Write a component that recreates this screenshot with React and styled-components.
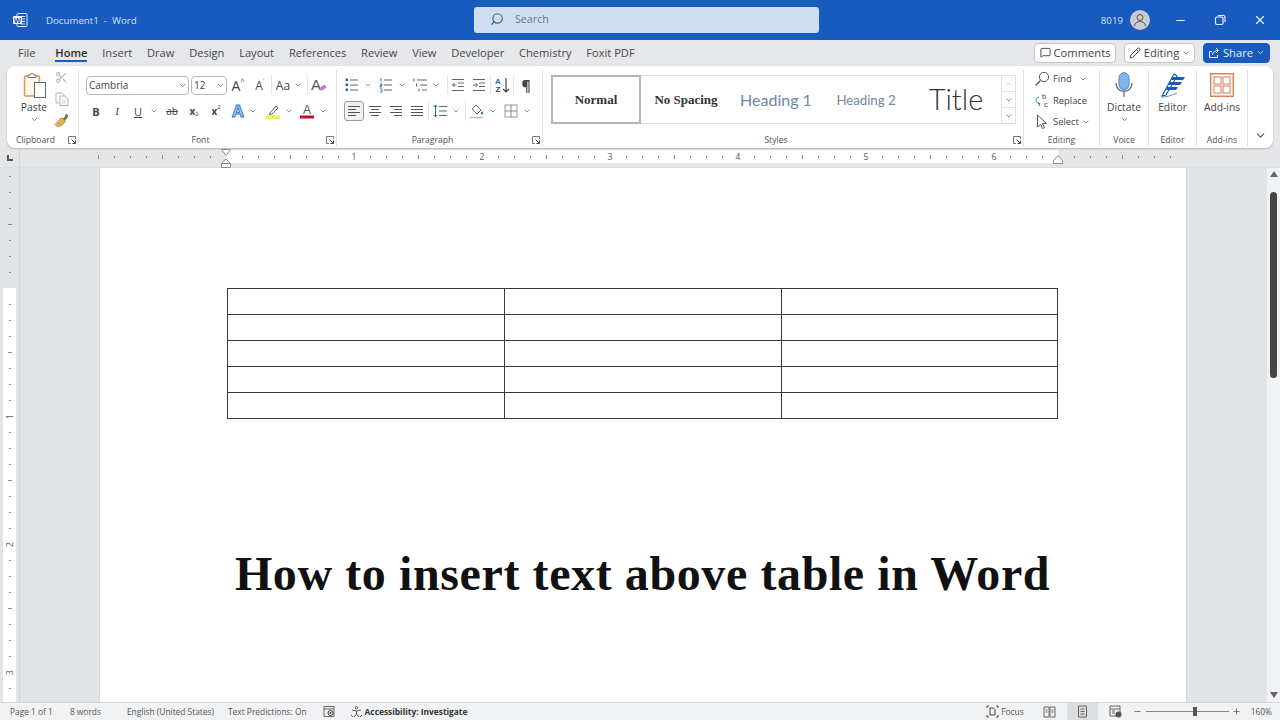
import styled, { createGlobalStyle } from 'styled-components';
import { Search, Minus, Plus, X, Scissors, ChevronDown, MessageSquare, Pencil } from 'lucide-react';

const UI = '"Open Sans", "Noto Sans", "Liberation Sans", sans-serif';
const SERIF = '"Liberation Serif", "DejaVu Serif", serif';

const Global = createGlobalStyle`
  html, body { margin: 0; padding: 0; }
  body { font-family: ${UI}; background: #e2e5e7; }
`;

const ChevWrap = styled.span`
  display: inline-flex;
  margin-top: ${(p) => p.$mt ?? 0}px;
  margin-left: ${(p) => p.$ml ?? 0}px;
  transform: ${(p) => (p.$up ? 'rotate(180deg)' : 'none')};
`;
const Chev = ({ size = 9, color = '#555', mt, ml, up }) => (
  <ChevWrap $mt={mt} $ml={ml} $up={up}><ChevronDown size={size} color={color} strokeWidth={2} /></ChevWrap>
);

const Shell = styled.div`
  width: 1280px;
  height: 720px;
  display: flex;
  flex-direction: column;
  overflow: hidden;
  background: #e2e5e7;
`;

/* title bar */
const TitleBar = styled.header`
  height: 40px;
  flex: none;
  background: #185abd;
  display: grid;
  grid-template-columns: 474px 345px 1fr;
  align-items: center;
`;
const TitleLeft = styled.div`
  display: flex;
  align-items: center;
  padding-left: 12px;
  gap: 18px;
  color: #d6e2f5;
  font-size: 9.7px;
  white-space: pre;
`;
const SearchBox = styled.div`
  height: 26px;
  box-sizing: border-box;
  background: #cfdef0;
  border-radius: 3px;
  display: flex;
  align-items: center;
  padding: 0 0 2px 16px;
  gap: 11px;
  color: #5b7a9f;
  font-size: 10.7px;
`;
const SearchGlyph = styled(Search)`
  transform: scaleX(-1);
`;
const TitleRight = styled.div`
  display: flex;
  align-items: center;
  justify-content: flex-end;
  color: #d6e2f5;
  font-size: 9.7px;
`;
const Avatar = styled.div`
  width: 20px;
  height: 20px;
  border-radius: 50%;
  background: #c9cdd3;
  margin: 0 10px 0 7px;
  display: flex;
  align-items: center;
  justify-content: center;
`;
const WinButton = styled.div`
  width: 40px;
  display: flex;
  justify-content: center;
`;

/* tabs */
const TabRow = styled.nav`
  height: 25px;
  flex: none;
  background: #e6e7ea;
  display: flex;
  align-items: center;
  justify-content: space-between;
  padding: 0 10px 0 18px;
`;
const Tabs = styled.div`
  display: flex;
  gap: 14.8px;
`;
const Tab = styled.div`
  position: relative;
  font-size: 11.1px;
  margin-right: ${(p) => p.$mr ?? 0}px;
  color: ${(p) => (p.$active ? '#2f2f2f' : '#484848')};
  font-weight: ${(p) => (p.$active ? 600 : 400)};
  &::after {
    content: '';
    display: ${(p) => (p.$active ? 'block' : 'none')};
    position: absolute;
    left: 0;
    right: 0;
    bottom: -2px;
    height: 2px;
    background: #185abd;
  }
`;
const Actions = styled.div`
  display: flex;
  gap: 8px;
`;
const ActionButton = styled.div`
  height: 20px;
  width: ${(p) => p.$w}px;
  box-sizing: border-box;
  border-radius: 4px;
  border: 1px solid ${(p) => (p.$primary ? '#185abd' : '#c6c6c6')};
  background: ${(p) => (p.$primary ? '#185abd' : '#fdfdfd')};
  color: ${(p) => (p.$primary ? '#e8f0fb' : '#444')};
  display: flex;
  align-items: center;
  justify-content: center;
  gap: 3px;
  font-size: 11.2px;
`;

/* ribbon */
const RibbonBand = styled.div`
  height: 85px;
  flex: none;
  padding: 1px 7px 2px;
  box-sizing: border-box;
  background: #e6e7ea;
`;
const Ribbon = styled.div`
  height: 82px;
  display: flex;
  background: #fff;
  border-radius: 8px;
  box-shadow: 0 1px 2px rgba(0, 0, 0, 0.22);
`;
const Group = styled.section`
  width: ${(p) => p.$w}px;
  flex: none;
  box-sizing: border-box;
  display: flex;
  flex-direction: column;
  margin: 4px 0 2px;
  border-right: 1px solid #e4e4e4;
`;
const GroupBody = styled.div`
  flex: 1;
  min-height: 0;
  box-sizing: border-box;
  display: flex;
  padding: ${(p) => p.$pt ?? 5}px 0 0 ${(p) => p.$pl ?? 0}px;
  justify-content: ${(p) => (p.$center ? 'center' : 'flex-start')};
`;
const GroupFoot = styled.div`
  height: 12px;
  flex: none;
  display: grid;
  grid-template-columns: 1fr auto 1fr;
  align-items: center;
  font-size: 8.6px;
  color: #505050;
  box-sizing: border-box;
  padding-right: ${(p) => (p.$launcher ? 14 : 0)}px;
`;
const Launcher = styled.svg`
  justify-self: end;
  margin-right: -12px;
  width: 8px;
  height: 8px;
`;
const Stack = styled.div`
  display: flex;
  flex-direction: column;
  gap: 6px;
`;
const ToolRow = styled.div`
  display: flex;
  height: 20px;
  align-items: center;
`;
const Tool = styled.div`
  width: ${(p) => p.$w}px;
  margin-left: ${(p) => p.$ml ?? 0}px;
  height: 20px;
  box-sizing: border-box;
  flex: none;
  display: flex;
  align-items: center;
  justify-content: center;
  font-size: ${(p) => p.$fs ?? 12}px;
  font-family: ${(p) => (p.$serif ? SERIF : UI)};
  font-weight: ${(p) => (p.$bold ? 700 : 400)};
  font-style: ${(p) => (p.$italic ? 'italic' : 'normal')};
  text-decoration: ${(p) => p.$deco ?? 'none'};
  color: #444;
  border-radius: 3px;
  ${(p) => p.$on && 'background: #f0f0f0; border: 1px solid #9b9b9b;'}
`;
const Tiny = styled.span`
  font-size: ${(p) => p.$fs ?? 6}px;
  font-weight: 400;
  transform: translateY(${(p) => (p.$low ? 3 : -4)}px);
`;
const Sep = styled.div`
  width: 1px;
  height: 20px;
  flex: none;
  margin-left: ${(p) => p.$ml ?? 0}px;
  background: #e4e4e4;
`;
const FieldBox = styled.div`
  width: ${(p) => p.$w}px;
  margin-left: ${(p) => p.$ml ?? 0}px;
  height: 19px;
  box-sizing: border-box;
  flex: none;
  border: 1px solid #b9b9b9;
  border-radius: 4px;
  display: flex;
  align-items: center;
  justify-content: space-between;
  padding: 0 1px 0 2px;
  font-size: 10px;
  color: #444;
`;
const BigTool = styled.div`
  width: ${(p) => p.$w ?? 40}px;
  display: flex;
  flex-direction: column;
  align-items: center;
  font-size: 10.3px;
  line-height: 14px;
  color: #444;
  padding-top: 2px;
`;
const BigIcon = styled.div`
  height: 26px;
  margin: 0 0 2px ${(p) => p.$ml ?? 0}px;
  display: flex;
  align-items: center;
`;
const SmallColumn = styled.div`
  display: flex;
  flex-direction: column;
  margin: -3px 0 0 ${(p) => p.$ml ?? 0}px;
`;
const SmallTool = styled.div`
  height: 21.5px;
  flex: none;
  display: flex;
  align-items: center;
  gap: 3px;
  font-size: 9.4px;
  color: #444;
`;
const SmallIcon = styled.div`
  width: 17px;
  display: flex;
  justify-content: center;
`;
const Gallery = styled.div`
  width: 465px;
  height: 49px;
  box-sizing: border-box;
  display: flex;
  border: 1px solid #e0e0e0;
  border-left: none;
`;
const StyleTile = styled.div`
  width: 90px;
  flex: none;
  box-sizing: border-box;
  display: flex;
  align-items: center;
  justify-content: center;
  color: ${(p) => p.$color};
  font-family: ${(p) => (p.$serif ? SERIF : '"Lato", sans-serif')};
  font-weight: ${(p) => p.$weight ?? 400};
  font-size: ${(p) => p.$fs}px;
  padding-bottom: ${(p) => p.$pb ?? 0}px;
  ${(p) => p.$on && 'margin: -1px 0; height: 49px; border: 2px solid #b4b4b4;'}
`;
const GalleryScroll = styled.div`
  margin-left: auto;
  width: 13px;
  display: flex;
  flex-direction: column;
  border-left: 1px solid #e0e0e0;
`;
const ScrollCell = styled.div`
  flex: 1;
  display: flex;
  align-items: center;
  justify-content: center;
  border-bottom: 1px solid #e0e0e0;
  &:last-child { border-bottom: none; }
`;
const Collapse = styled.div`
  flex: 1;
  display: flex;
  align-items: flex-end;
  justify-content: center;
  padding-bottom: 6px;
`;

/* rulers */
const HRuler = styled.div`
  height: 18px;
  flex: none;
  position: relative;
  display: flex;
  background: #e4e6e8;
  border-bottom: 1px solid #dcdfe1;
  box-sizing: border-box;
`;
const RulerCorner = styled.div`
  width: 20px;
  flex: none;
  box-sizing: border-box;
  border-right: 1px solid #d2d5d7;
  padding: 5px 0 0 7px;
  display: flex;
  align-items: flex-start;
`;
const RulerSpan = styled.div`
  width: ${(p) => p.$w}px;
  height: 13px;
  flex: none;
  box-sizing: border-box;
  padding-left: ${(p) => p.$pl}px;
  display: flex;
  background: ${(p) => (p.$white ? '#fff' : 'transparent')};
`;
const HCell = styled.div`
  width: 16px;
  flex: none;
  display: flex;
  align-items: center;
  justify-content: center;
  font-size: 8.5px;
  color: #555;
`;
const HTick = styled.div`
  width: 1px;
  height: ${(p) => (p.$long ? 4 : 2)}px;
  background: #8a8a8a;
`;
const IndentMarker = styled.svg`
  position: absolute;
  left: 220px;
  top: -1px;
  width: 12px;
  height: 19px;
`;
const RightMarker = styled.svg`
  position: absolute;
  left: 1052px;
  top: 3px;
  width: 12px;
  height: 12px;
`;

const Workspace = styled.main`
  flex: 1;
  min-height: 0;
  display: flex;
`;
const VRuler = styled.div`
  width: 20px;
  flex: none;
  box-sizing: border-box;
  border-right: 1px solid #d2d5d7;
  padding-left: 3px;
`;
const VSpan = styled.div`
  width: 13px;
  height: ${(p) => p.$h}px;
  box-sizing: border-box;
  padding-top: ${(p) => p.$pt}px;
  background: ${(p) => (p.$white ? '#fff' : 'transparent')};
`;
const VCell = styled.div`
  height: 16px;
  display: flex;
  align-items: center;
  justify-content: center;
  font-size: 8.5px;
  color: #555;
`;
const RotNum = styled.span`
  transform: rotate(-90deg);
`;
const VTick = styled.div`
  height: 1px;
  width: ${(p) => (p.$long ? 4 : 2)}px;
  background: #8a8a8a;
`;
const Canvas = styled.div`
  flex: 1;
  min-width: 0;
  display: flex;
  padding-left: 80px;
  overflow: hidden;
`;
const Page = styled.article`
  width: 1086px;
  flex: none;
  box-sizing: border-box;
  background: #fff;
  padding: 120px 128px 0 127px;
  box-shadow: 0 0 0 1px #d6d9db;
`;
const DocTable = styled.table`
  width: 831px;
  border-collapse: collapse;
  table-layout: fixed;
  td {
    height: 25px;
    border: 1px solid #3a3a3a;
    padding: 0;
  }
  td:first-child {
    width: 276px;
  }
`;
const DocTitle = styled.h1`
  margin: 128px 0 0;
  text-align: center;
  font-family: ${SERIF};
  font-weight: 700;
  font-size: 48px;
  line-height: 54px;
  color: #111;
  white-space: nowrap;
  letter-spacing: 0.6px;
`;
const ScrollBar = styled.div`
  width: 13px;
  flex: none;
  background: #f0f2f3;
  display: flex;
  flex-direction: column;
  align-items: center;
  padding-top: 3px;
  box-sizing: border-box;
`;
const ScrollThumb = styled.div`
  width: 7px;
  height: 186px;
  margin-top: 15px;
  border-radius: 4px;
  background: #454545;
`;
const ScrollArrow = styled.div`
  width: 0;
  height: 0;
  border-left: 4px solid transparent;
  border-right: 4px solid transparent;
  ${(p) => (p.$down ? 'border-top: 6px solid #666; margin-top: auto; margin-bottom: 4px;' : 'border-bottom: 6px solid #666;')}
`;

/* status bar */
const StatusBar = styled.footer`
  height: 18px;
  flex: none;
  box-sizing: border-box;
  background: #f1f2f3;
  border-top: 1px solid #d6d6d6;
  display: flex;
  align-items: center;
  justify-content: space-between;
  font-size: 8.4px;
  color: #555;
`;
const StatusSide = styled.div`
  display: flex;
  align-items: center;
  height: 100%;
`;
const StatusItem = styled.span`
  display: flex;
  align-items: center;
  gap: 2px;
  margin-left: ${(p) => p.$ml}px;
  margin-right: ${(p) => p.$mr ?? 0}px;
  font-weight: ${(p) => (p.$bold ? 700 : 400)};
  color: ${(p) => (p.$bold ? '#333' : '#555')};
  white-space: nowrap;
`;
const ViewButton = styled.div`
  width: 31px;
  height: 100%;
  margin-left: ${(p) => p.$ml ?? 0}px;
  display: flex;
  align-items: center;
  justify-content: center;
  background: ${(p) => (p.$on ? '#dcdddf' : 'transparent')};
`;
const ZoomOut = styled(Minus)`
  margin-left: 2px;
`;
const ZoomTrack = styled.div`
  width: 83px;
  height: 1px;
  margin: 0 3px 0 4px;
  background: #888;
  position: relative;
`;
const ZoomThumb = styled.div`
  position: absolute;
  left: 47px;
  top: -4px;
  width: 4px;
  height: 9px;
  background: #555;
`;

/* drawn icons */
const Ico = ({ w = 16, h = 16, children }) => (
  <svg width={w} height={h} viewBox={`0 0 ${w} ${h}`} fill="none">{children}</svg>
);
const WordLogo = () => (
  <Ico>
    <rect x="5" y="1.5" width="10" height="13" rx="1" fill="#185abd" stroke="#dfe9f7" />
    <path d="M9 4.5h4M9 7h4M9 9.5h4M9 12h4" stroke="#dfe9f7" />
    <rect x="1" y="4" width="9" height="8" fill="#f4f7fc" rx="1" />
    <text x="5.5" y="10.6" fontSize="7.5" fontWeight="700" fontFamily="Liberation Sans" fill="#185abd" textAnchor="middle">W</text>
  </Ico>
);
const PasteIcon = () => (
  <Ico w={24} h={26}>
    <rect x="1.5" y="4" width="15" height="20" rx="1" fill="#fdf6ec" stroke="#d99a55" strokeWidth="1.5" />
    <path d="M5 5V3h2.5a1.7 1.7 0 0 1 3.4 0H13v2.5H5z" fill="#fff" stroke="#777" />
    <rect x="11.5" y="10.5" width="11" height="15" fill="#fff" stroke="#666" />
  </Ico>
);
const CopyIcon = () => (
  <Ico w={14} h={14}>
    <path d="M1 1h6l2 2v8H1z" stroke="#b4b4b4" fill="#fff" />
    <path d="M5 4h5l3 3v6.5H5z" stroke="#b4b4b4" fill="#fff" />
    <path d="M7 9h4M7 11h4" stroke="#cdcdcd" />
  </Ico>
);
const PainterIcon = () => (
  <Ico w={15} h={15}>
    <path d="M9 6l2-2 1-3 2 1.5-1 2.5-2 2.5z" fill="#777" stroke="#555" strokeWidth="0.6" />
    <path d="M7.5 4.5l4 4L8 12 3.5 14 1 11.5l3-3z" fill="#e9b455" stroke="#a9824a" strokeWidth="0.8" />
    <path d="M4 9.5l2.5 2.5" stroke="#a9824a" strokeWidth="0.8" />
  </Ico>
);
const Launch = () => (
  <Launcher viewBox="0 0 8 8" fill="none">
    <path d="M7.5 3V.5H.5v7H3" stroke="#777" />
    <path d="M3.5 3.5l3.5 3.5M7.5 4.5v3h-3" stroke="#444" />
  </Launcher>
);
const listLines = (x) => `M${x} 3h${13 - x}M${x} 8h${13 - x}M${x} 13h${13 - x}`;
const BulletIcon = () => (
  <Ico w={14} h={16}>
    <path d={listLines(5)} stroke="#666" strokeWidth="1.2" />
    <rect x="0.5" y="1.5" width="2.6" height="2.6" fill="#2a6f9e" />
    <rect x="0.5" y="6.5" width="2.6" height="2.6" fill="#2a6f9e" />
    <rect x="0.5" y="11.5" width="2.6" height="2.6" fill="#2a6f9e" />
  </Ico>
);
const NumberIcon = () => (
  <Ico w={14} h={16}>
    <path d={listLines(5)} stroke="#666" strokeWidth="1.2" />
    <path d="M2 1v3.5M1 7h2v1.5H1V10h2M1 12h2v3H1" stroke="#2a6f9e" strokeWidth="0.9" />
  </Ico>
);
const MultiIcon = () => (
  <Ico w={14} h={16}>
    <path d="M4 3h10M7 8h7M9 13h5" stroke="#666" strokeWidth="1.2" />
    <path d="M1 1.5v3M3.5 6.5v3M6 11.5v3" stroke="#2a6f9e" />
  </Ico>
);
const IndentIcon = ({ inc }) => (
  <Ico w={14} h={14}>
    <path d="M1 1.5h12M7 5h6M7 8.5h6M1 12.5h12" stroke="#666" strokeWidth="1.1" />
    <path d={inc ? 'M1 7h4M3.5 5l2 2-2 2' : 'M1.5 7h4M3.5 5l-2 2 2 2'} stroke="#2a7f6e" />
  </Ico>
);
const SortIcon = () => (
  <Ico w={16} h={18}>
    <text x="4" y="8" fontSize="8" fontFamily="Liberation Sans" fill="#2a6f9e" textAnchor="middle" fontWeight="700">A</text>
    <text x="4" y="16" fontSize="8" fontFamily="Liberation Sans" fill="#444" textAnchor="middle" fontWeight="700">Z</text>
    <path d="M12 2v14M9 13l3 3 3-3" stroke="#444" strokeWidth="1.2" />
  </Ico>
);
const AlignIcon = ({ d }) => (
  <Ico w={14} h={12}>
    <path d={d} stroke="#555" strokeWidth="1.1" />
  </Ico>
);
const SpacingIcon = () => (
  <Ico w={14} h={14}>
    <path d="M6 2.5h8M6 7h8M6 11.5h8" stroke="#666" strokeWidth="1.1" />
    <path d="M2.5 1v12M.8 3l1.7-2 1.7 2M.8 11l1.7 2 1.7-2" stroke="#2a7f6e" />
  </Ico>
);
const ShadeIcon = () => (
  <Ico>
    <path d="M7 2l5 5-4 4-5-5z" fill="#fff" stroke="#666" />
    <path d="M13 8c1 1.5 1.5 2 1 3s-2 .5-2-.5.5-1.5 1-2.5z" fill="#2a6f9e" />
    <path d="M1 14.5h13" stroke="#bbb" strokeWidth="1.5" />
  </Ico>
);
const BorderIcon = () => (
  <Ico w={14} h={14}>
    <rect x="1" y="1" width="12" height="12" stroke="#999" />
    <path d="M7 1v12M1 7h12" stroke="#888" />
  </Ico>
);
const ClearIcon = () => (
  <Ico w={18} h={18}>
    <text x="1" y="14" fontSize="15" fontFamily="Liberation Sans" fill="#555">A</text>
    <rect x="10" y="10" width="6.5" height="3.5" rx="1" transform="rotate(-35 13 12)" fill="#c878c0" />
  </Ico>
);
const TextEffect = () => (
  <Ico w={18} h={18}>
    <text x="9" y="15" fontSize="17" fontWeight="700" fontFamily="Liberation Sans" fill="#bcdcf3" stroke="#2b79c2" strokeWidth="1" textAnchor="middle">A</text>
  </Ico>
);
const HighlightIcon = () => (
  <Ico>
    <path d="M5 10l6-7 2 2-6 6-3 .5z" fill="#fff" stroke="#666" />
    <rect x="1" y="12.5" width="14" height="3.5" fill="#f6f250" />
  </Ico>
);
const FontColorIcon = () => (
  <Ico>
    <text x="8" y="11" fontSize="12" fontFamily="Liberation Sans" fill="#555" textAnchor="middle">A</text>
    <rect x="1" y="12.5" width="14" height="3" fill="#c8102e" />
  </Ico>
);
const ReplaceIcon = () => (
  <Ico>
    <text x="8" y="7" fontSize="7.5" fontFamily="Liberation Sans" fill="#444">b</text>
    <text x="10" y="14.5" fontSize="7.5" fontFamily="Liberation Sans" fill="#444">c</text>
    <path d="M5 5C1 6 1 11 6 12M4 10.5L6 12l-1.5 2" stroke="#2a7f9e" />
  </Ico>
);
const SelectIcon = () => (
  <Ico w={14} h={16}>
    <path d="M2.5 1v12l3-2.5 2 4 2-1-2-4h4z" fill="#fff" stroke="#555" />
  </Ico>
);
const FindIcon = () => (
  <Ico>
    <circle cx="10" cy="6" r="4.6" stroke="#555" />
    <path d="M6.5 9.5L1.5 14.5" stroke="#555" strokeWidth="1.3" />
  </Ico>
);
const MicIcon = () => (
  <Ico w={18} h={26}>
    <rect x="4" y="0.7" width="10" height="17" rx="5" fill="#7cb6ea" stroke="#4a86c0" />
    <path d="M1 11c0 11 16 11 16 0M9 19v6" stroke="#6d6d6d" strokeWidth="1.3" />
  </Ico>
);
const EditorIcon = () => (
  <Ico w={26} h={26}>
    <path d="M12 5h13l-2 3H11zM10 10h12l-2 3H8zM7 15h11l-2 3H6z" fill="#185abd" />
    <path d="M2 24L14 2l3 2L6 23z" stroke="#185abd" strokeWidth="1.2" />
    <path d="M1 25c5 0 10-1 16-4" stroke="#6d90c4" />
  </Ico>
);
const AddinsIcon = () => (
  <Ico w={24} h={24}>
    <rect x="0.7" y="0.7" width="22.6" height="22.6" stroke="#d9825b" strokeWidth="1.4" fill="#fdf3ec" />
    <rect x="4" y="4" width="7" height="7" stroke="#d9825b" fill="#fff" />
    <rect x="13" y="4" width="7" height="7" stroke="#d9825b" fill="#fff" />
    <rect x="4" y="13" width="7" height="7" stroke="#d9825b" fill="#fff" />
    <rect x="13" y="13" width="7" height="7" stroke="#d9825b" fill="#fff" />
  </Ico>
);
const AvatarGlyph = () => (
  <Ico w={14} h={14}>
    <circle cx="7" cy="4.5" r="3" stroke="#555" />
    <path d="M1.5 13c.5-6 10.5-6 11 0" stroke="#555" />
  </Ico>
);
const RestoreIcon = () => (
  <Ico w={12} h={12}>
    <rect x="1.5" y="3" width="7.5" height="7.5" rx="1.5" stroke="#eaf1fb" strokeWidth="1.2" />
    <path d="M4 1.5h5a2 2 0 0 1 2 2V8" stroke="#eaf1fb" strokeWidth="1.2" />
  </Ico>
);
const ShareIcon = () => (
  <Ico w={12} h={12}>
    <path d="M4 4.5H1.5v6h8V8M4.5 8C4.500 5 7 3.5 10 3.5M8 1l2.5 2.5L8 6" stroke="#e8f0fb" />
  </Ico>
);
const CornerTab = () => (
  <Ico w={6} h={6}><path d="M1 0v5h5" stroke="#555" strokeWidth="2" /></Ico>
);
const TinyDoc = ({ kind }) => (
  <Ico w={13} h={13}>
    {kind === 'read' && <path d="M1 2h5v10H1zM7 2h5v10H7zM2.5 5h2M2.5 7h2M8.5 5h2M8.5 7h2" stroke="#666" />}
    {kind === 'print' && <path d="M2.5 1h8v11h-8zM4.5 4h4M4.5 6.5h4M4.5 9h4" stroke="#666" />}
    {kind === 'web' && (
      <>
        <path d="M1 1h10v10H1zM1 4h10M3 6h3M3 8h3" stroke="#666" />
        <circle cx="9.5" cy="9.5" r="3" fill="#555" />
      </>
    )}
    {kind === 'macro' && (
      <>
        <path d="M1 1.5h10v10H1zM1 4h10" stroke="#666" />
        <circle cx="7.5" cy="8" r="2.5" stroke="#444" />
        <circle cx="7.5" cy="8" r="1" fill="#444" />
      </>
    )}
    {kind === 'focus' && <path d="M1 3V1h2M10 1h2v2M12 10v2h-2M3 12H1v-2M4 3h3.5L9 4.5V10H4z" stroke="#444" />}
    {kind === 'access' && <path d="M6.5 1.5a1.2 1.2 0 1 1 0 2.4 1.2 1.2 0 0 1 0-2.4zM2 5l4.5 1L11 5M6.5 6v3M6.5 9L4 12M6.5 9L9 12M1 10l2 2M12 10l-2 2" stroke="#555" />}
  </Ico>
);

const TABS = ['File', 'Home', 'Insert', 'Draw', 'Design', 'Layout', 'References', 'Review', 'View', 'Developer', 'Chemistry', 'Foxit PDF'];
const range = (n) => Array.from({ length: n }, (_, i) => i);

const hCells = (start, count) => range(count).map((i) => {
  const n = start + i;
  if (n > 0 && n % 8 === 0 && n <= 48) return <HCell key={n}>{n / 8}</HCell>;
  return <HCell key={n}><HTick $long={n % 4 === 0} /></HCell>;
});

const vCells = (start, count) => range(count).map((i) => {
  const n = start + i;
  if (n > 0 && n % 8 === 0) return <VCell key={n}><RotNum>{n / 8}</RotNum></VCell>;
  return <VCell key={n}><VTick $long={n % 4 === 0} /></VCell>;
});

const Foot = ({ label, launcher }) => (
  <GroupFoot $launcher={launcher}>
    <span />
    <span>{label}</span>
    {launcher ? <Launch /> : <span />}
  </GroupFoot>
);

const App = () => (
  <Shell>
    <Global />
    <TitleBar>
      <TitleLeft><WordLogo />Document1  -  Word</TitleLeft>
      <SearchBox><SearchGlyph size={14} color="#3f5f88" />Search</SearchBox>
      <TitleRight>
        8019
        <Avatar><AvatarGlyph /></Avatar>
        <WinButton><Minus size={13} color="#eaf1fb" /></WinButton>
        <WinButton><RestoreIcon /></WinButton>
        <WinButton><X size={14} color="#eaf1fb" /></WinButton>
      </TitleRight>
    </TitleBar>

    <TabRow>
      <Tabs>{TABS.map((t) => <Tab key={t} $active={t === 'Home'} $mr={t === 'File' ? 5 : 0}>{t}</Tab>)}</Tabs>
      <Actions>
        <ActionButton $w={82}><MessageSquare size={11} />Comments</ActionButton>
        <ActionButton $w={71}><Pencil size={12} />Editing<Chev size={8} /></ActionButton>
        <ActionButton $w={67} $primary><ShareIcon />Share<Chev size={9} color="#e8f0fb" /></ActionButton>
      </Actions>
    </TabRow>

    <RibbonBand>
      <Ribbon>
        <Group $w={72}>
          <GroupBody $pt={0} $pl={10}>
            <BigTool $w={34}>
              <BigIcon $ml={2}><PasteIcon /></BigIcon>
              Paste
              <Chev mt={1} />
            </BigTool>
            <SmallColumn $ml={2}>
              <SmallTool><SmallIcon><Scissors size={13} color="#b5b5b5" /></SmallIcon></SmallTool>
              <SmallTool><SmallIcon><CopyIcon /></SmallIcon></SmallTool>
              <SmallTool><SmallIcon><PainterIcon /></SmallIcon></SmallTool>
            </SmallColumn>
          </GroupBody>
          <Foot label="Clipboard" launcher />
        </Group>

        <Group $w={258}>
          <GroupBody $pl={7}>
            <Stack>
              <ToolRow>
                <FieldBox $w={103}>Cambria<Chev size={9} /></FieldBox>
                <FieldBox $w={36} $ml={2}>12<Chev size={9} /></FieldBox>
                <Tool $w={22} $fs={14}>A<Tiny $fs={7}>^</Tiny></Tool>
                <Tool $w={22} $fs={12}>A<Tiny $fs={7}>˅</Tiny></Tool>
                <Sep />
                <Tool $w={22} $fs={12}>Aa</Tool>
                <Tool $w={8}><Chev size={8} /></Tool>
                <Sep $ml={5} />
                <Tool $w={22}><ClearIcon /></Tool>
              </ToolRow>
              <ToolRow>
                <Tool $w={20} $fs={11} $bold>B</Tool>
                <Tool $w={22} $fs={11} $italic $serif>I</Tool>
                <Tool $w={20} $fs={11} $deco="underline">U</Tool>
                <Tool $w={12}><Chev size={8} /></Tool>
                <Tool $w={24} $fs={10} $deco="line-through">ab</Tool>
                <Tool $w={20} $fs={10} $bold>x<Tiny $low>2</Tiny></Tool>
                <Tool $w={24} $fs={10} $bold>x<Tiny>2</Tiny></Tool>
                <Tool $w={20}><TextEffect /></Tool>
                <Tool $w={10}><Chev size={8} /></Tool>
                <Tool $w={20} $ml={5}><HighlightIcon /></Tool>
                <Tool $w={12}><Chev size={8} /></Tool>
                <Tool $w={24}><FontColorIcon /></Tool>
                <Tool $w={8}><Chev size={8} /></Tool>
              </ToolRow>
            </Stack>
          </GroupBody>
          <Foot label="Font" launcher />
        </Group>

        <Group $w={206}>
          <GroupBody $pl={7}>
            <Stack>
              <ToolRow>
                <Tool $w={16}><BulletIcon /></Tool>
                <Tool $w={16}><Chev size={8} /></Tool>
                <Tool $w={20}><NumberIcon /></Tool>
                <Tool $w={12}><Chev size={8} /></Tool>
                <Tool $w={24}><MultiIcon /></Tool>
                <Tool $w={8}><Chev size={8} /></Tool>
                <Sep $ml={7} />
                <Tool $w={20}><IndentIcon /></Tool>
                <Tool $w={22}><IndentIcon inc /></Tool>
                <Sep />
                <Tool $w={22}><SortIcon /></Tool>
                <Sep />
                <Tool $w={24} $fs={14} $bold>¶</Tool>
              </ToolRow>
              <ToolRow>
                <Tool $w={20} $on><AlignIcon d="M1 1.5h12M1 4.5h8M1 7.5h12M1 10.5h8" /></Tool>
                <Tool $w={22}><AlignIcon d="M1 1.5h12M3 4.5h8M1 7.5h12M3 10.5h8" /></Tool>
                <Tool $w={20}><AlignIcon d="M1 1.5h12M5 4.5h8M1 7.5h12M5 10.5h8" /></Tool>
                <Tool $w={22}><AlignIcon d="M1 1.5h12M1 4.5h12M1 7.5h12M1 10.5h12" /></Tool>
                <Sep />
                <Tool $w={22}><SpacingIcon /></Tool>
                <Tool $w={10}><Chev size={8} /></Tool>
                <Sep $ml={4} />
                <Tool $w={22}><ShadeIcon /></Tool>
                <Tool $w={10}><Chev size={8} /></Tool>
                <Tool $w={24} $ml={1}><BorderIcon /></Tool>
                <Tool $w={8}><Chev size={8} /></Tool>
              </ToolRow>
            </Stack>
          </GroupBody>
          <Foot label="Paragraph" launcher />
        </Group>

        <Group $w={481}>
          <GroupBody $pl={8}>
            <Gallery>
              <StyleTile $on $serif $fs={13} $weight={700} $color="#333">Normal</StyleTile>
              <StyleTile $serif $fs={13} $weight={700} $color="#333">No Spacing</StyleTile>
              <StyleTile $fs={16} $color="#6d88a4">Heading 1</StyleTile>
              <StyleTile $fs={13.2} $color="#6d88a4">Heading 2</StyleTile>
              <StyleTile $fs={29} $weight={300} $color="#333" $pb={3}>Title</StyleTile>
              <GalleryScroll>
                <ScrollCell><Chev size={8} color="#c4c4c4" up /></ScrollCell>
                <ScrollCell><Chev size={8} /></ScrollCell>
                <ScrollCell><Chev size={8} /></ScrollCell>
              </GalleryScroll>
            </Gallery>
          </GroupBody>
          <Foot label="Styles" launcher />
        </Group>

        <Group $w={76}>
          <GroupBody $pt={1} $pl={9}>
            <SmallColumn>
              <SmallTool><SmallIcon><FindIcon /></SmallIcon>Find<Chev size={8} ml={4} /></SmallTool>
              <SmallTool><SmallIcon><ReplaceIcon /></SmallIcon>Replace</SmallTool>
              <SmallTool><SmallIcon><SelectIcon /></SmallIcon>Select<Chev size={8} /></SmallTool>
            </SmallColumn>
          </GroupBody>
          <Foot label="Editing" />
        </Group>

        <Group $w={49}>
          <GroupBody $pt={0} $center>
            <BigTool>
              <BigIcon><MicIcon /></BigIcon>
              Dictate
              <Chev mt={1} />
            </BigTool>
          </GroupBody>
          <Foot label="Voice" />
        </Group>

        <Group $w={48}>
          <GroupBody $pt={0} $center>
            <BigTool>
              <BigIcon><EditorIcon /></BigIcon>
              Editor
            </BigTool>
          </GroupBody>
          <Foot label="Editor" />
        </Group>

        <Group $w={51}>
          <GroupBody $pt={0} $center>
            <BigTool>
              <BigIcon><AddinsIcon /></BigIcon>
              Add-ins
            </BigTool>
          </GroupBody>
          <Foot label="Add-ins" />
        </Group>

        <Collapse><Chev size={13} /></Collapse>
      </Ribbon>
    </RibbonBand>

    <HRuler>
      <RulerCorner><CornerTab /></RulerCorner>
      <RulerSpan $w={206} $pl={70}>{hCells(-8, 8)}</RulerSpan>
      <RulerSpan $w={832} $pl={8} $white>{hCells(1, 51)}</RulerSpan>
      <RulerSpan $w={222} $pl={8}>{hCells(53, 7)}</RulerSpan>
      <IndentMarker viewBox="0 0 12 19" fill="none">
        <path d="M1.5 .5h9L6 6.5zM1.5 18.5v-4L6 10l4.5 4.5v4z" fill="#fff" stroke="#8a8a8a" />
        <path d="M1.5 14.5h9" stroke="#8a8a8a" />
      </IndentMarker>
      <RightMarker viewBox="0 0 12 12" fill="none">
        <path d="M1.5 10.5v-3L6 2.5l4.5 5v3z" fill="#fff" stroke="#8a8a8a" />
      </RightMarker>
    </HRuler>

    <Workspace>
      <VRuler>
        <VSpan $h={120} $pt={0}>{vCells(-7, 7)}</VSpan>
        <VSpan $h={414} $pt={8} $white>{vCells(1, 25)}</VSpan>
      </VRuler>
      <Canvas>
        <Page>
          <DocTable>
            <tbody>
              {range(5).map((r) => (
                <tr key={r}><td /><td /><td /></tr>
              ))}
            </tbody>
          </DocTable>
          <DocTitle>How to insert text above table in Word</DocTitle>
        </Page>
      </Canvas>
      <ScrollBar>
        <ScrollArrow />
        <ScrollThumb />
        <ScrollArrow $down />
      </ScrollBar>
    </Workspace>

    <StatusBar>
      <StatusSide>
        <StatusItem $ml={10}>Page 1 of 1</StatusItem>
        <StatusItem $ml={17}>8 words</StatusItem>
        <StatusItem $ml={26}>English (United States)</StatusItem>
        <StatusItem $ml={14}>Text Predictions: On</StatusItem>
        <StatusItem $ml={16}><TinyDoc kind="macro" /></StatusItem>
        <StatusItem $ml={14} $bold><TinyDoc kind="access" />Accessibility: Investigate</StatusItem>
      </StatusSide>
      <StatusSide>
        <StatusItem $ml={0}><TinyDoc kind="focus" />Focus</StatusItem>
        <ViewButton $ml={10}><TinyDoc kind="read" /></ViewButton>
        <ViewButton $ml={2} $on><TinyDoc kind="print" /></ViewButton>
        <ViewButton $ml={2}><TinyDoc kind="web" /></ViewButton>
        <ZoomOut size={9} color="#555" />
        <ZoomTrack><ZoomThumb /></ZoomTrack>
        <Plus size={9} color="#555" />
        <StatusItem $ml={10} $mr={8}>160%</StatusItem>
      </StatusSide>
    </StatusBar>
  </Shell>
);

export default App;
